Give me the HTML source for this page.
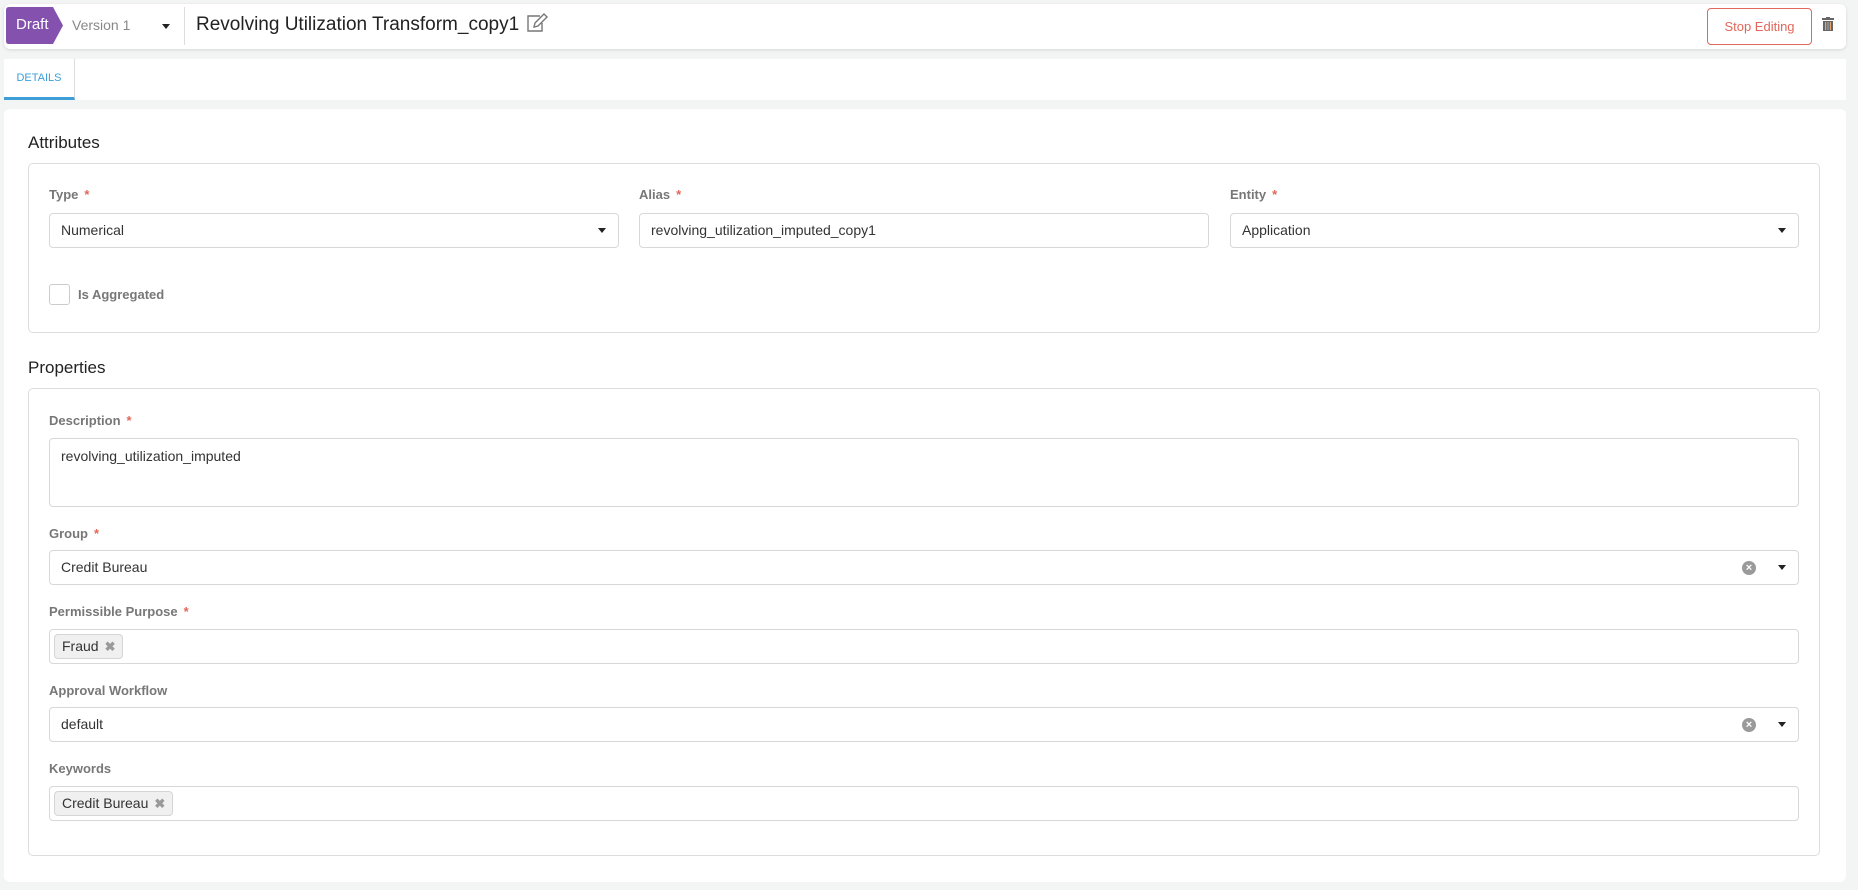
<!DOCTYPE html>
<html><head><meta charset="utf-8"><style>
*{box-sizing:border-box;margin:0;padding:0}
body{width:1858px;height:890px;background:#f3f4f4;font-family:"Liberation Sans",sans-serif;position:relative;overflow:hidden;color:#333}
.a{position:absolute}
.hdr{left:4px;top:4px;width:1842px;height:45px;background:#fff;border-radius:6px;box-shadow:0 1px 3px rgba(0,0,0,.12)}
.lbl{position:absolute;left:49px;font-size:13px;font-weight:bold;color:#777}
.lbl b{color:#e0675a;margin-left:6px}
.fld{position:absolute;height:35px;border:1px solid #d8d8d8;border-radius:4px;background:#fff;font-size:14px;color:#333;padding-left:11px;line-height:33px}
.caret{position:absolute;right:12px;top:14px;width:0;height:0;border-left:4px solid transparent;border-right:4px solid transparent;border-top:5px solid #222}
.clr{position:absolute;right:42px;top:10px;width:14px;height:14px;border-radius:50%;background:#9a9a9a;color:#fff;font-size:11px;line-height:14px;text-align:center;font-weight:bold}
.tag{position:absolute;top:4px;left:4px;height:25px;background:#f0f0f0;border:1px solid #d5d5d5;border-radius:4px;font-size:14px;line-height:23px;padding:0 7px}
.tag span{color:#999;margin-left:6px;font-weight:bold;font-size:13px}
.h{position:absolute;left:28px;font-size:17px;color:#222}
.box{position:absolute;left:28px;width:1792px;border:1px solid #ddd;border-radius:5px}
</style></head><body>
<div class="a hdr"></div>
<svg class="a" style="left:6px;top:7px" width="58" height="37"><path d="M3 0H47L57 18.5L47 37H3Q0 37 0 34V3Q0 0 3 0Z" fill="#8452ae"/></svg>
<div class="a" style="left:16px;top:16px;font-size:15px;color:#fff">Draft</div>
<div class="a" style="left:72px;top:17px;font-size:14px;color:#888">Version 1</div>
<div class="a caret" style="left:162px;top:24px"></div>
<div class="a" style="left:184px;top:7px;width:1px;height:38px;background:#ddd"></div>
<div class="a" style="left:196px;top:13px;font-size:19px;color:#222;white-space:nowrap">Revolving Utilization Transform_copy1 <svg style="vertical-align:-3px;margin-left:2px" width="22" height="20" viewBox="0 0 22 20" fill="none" stroke="#777" stroke-width="1.4"><path d="M14 3H2V18H16V10"/><path d="M18 1L21 4L12 13L8 14L9 10Z"/></svg></div>
<div class="a" style="left:1707px;top:8px;width:105px;height:37px;border:1px solid #e0675a;border-radius:4px;color:#e0675a;font-size:13px;line-height:35px;text-align:center">Stop Editing</div>
<svg class="a" style="left:1822px;top:17px" width="12" height="14" viewBox="0 0 12 14"><rect x="0" y="1" width="12" height="2" fill="#666"/><rect x="4" y="0" width="4" height="2" fill="#666"/><rect x="1" y="4" width="10" height="10" fill="#666"/><rect x="3" y="5" width="1.2" height="8" fill="#e9a36a"/><rect x="5.4" y="5" width="1.2" height="8" fill="#8ab"/><rect x="7.8" y="5" width="1.2" height="8" fill="#e9a36a"/></svg>
<div class="a" style="left:4px;top:59px;width:1842px;height:41px;background:#fff"></div>
<div class="a" style="left:4px;top:59px;width:71px;height:41px;border-right:1px solid #ddd;border-bottom:3px solid #3e9fd8;color:#3e9fd8;font-size:11px;line-height:38px;text-align:center">DETAILS</div>
<div class="a" style="left:4px;top:109px;width:1842px;height:773px;background:#fff;border-radius:6px"></div>
<div class="h" style="top:133px">Attributes</div>
<div class="box" style="top:163px;height:170px"></div>
<div class="lbl" style="top:187px">Type<b>*</b></div>
<div class="lbl" style="top:187px;left:639px">Alias<b>*</b></div>
<div class="lbl" style="top:187px;left:1230px">Entity<b>*</b></div>
<div class="fld" style="left:49px;top:213px;width:570px">Numerical<div class="caret"></div></div>
<div class="fld" style="left:639px;top:213px;width:570px">revolving_utilization_imputed_copy1</div>
<div class="fld" style="left:1230px;top:213px;width:569px">Application<div class="caret"></div></div>
<div class="a" style="left:49px;top:284px;width:21px;height:21px;border:1px solid #ccc;border-radius:3px"></div>
<div class="lbl" style="left:78px;top:287px">Is Aggregated</div>
<div class="h" style="top:358px">Properties</div>
<div class="box" style="top:388px;height:468px"></div>
<div class="lbl" style="top:413px">Description<b>*</b></div>
<div class="fld" style="left:49px;top:438px;width:1750px;height:69px;line-height:34px">revolving_utilization_imputed</div>
<div class="lbl" style="top:526px">Group<b>*</b></div>
<div class="fld" style="left:49px;top:550px;width:1750px">Credit Bureau<div class="clr">×</div><div class="caret"></div></div>
<div class="lbl" style="top:604px">Permissible Purpose<b>*</b></div>
<div class="fld" style="left:49px;top:629px;width:1750px"><div class="tag">Fraud<span>✖</span></div></div>
<div class="lbl" style="top:683px">Approval Workflow</div>
<div class="fld" style="left:49px;top:707px;width:1750px">default<div class="clr">×</div><div class="caret"></div></div>
<div class="lbl" style="top:761px">Keywords</div>
<div class="fld" style="left:49px;top:786px;width:1750px"><div class="tag">Credit Bureau<span>✖</span></div></div>
</body></html>
